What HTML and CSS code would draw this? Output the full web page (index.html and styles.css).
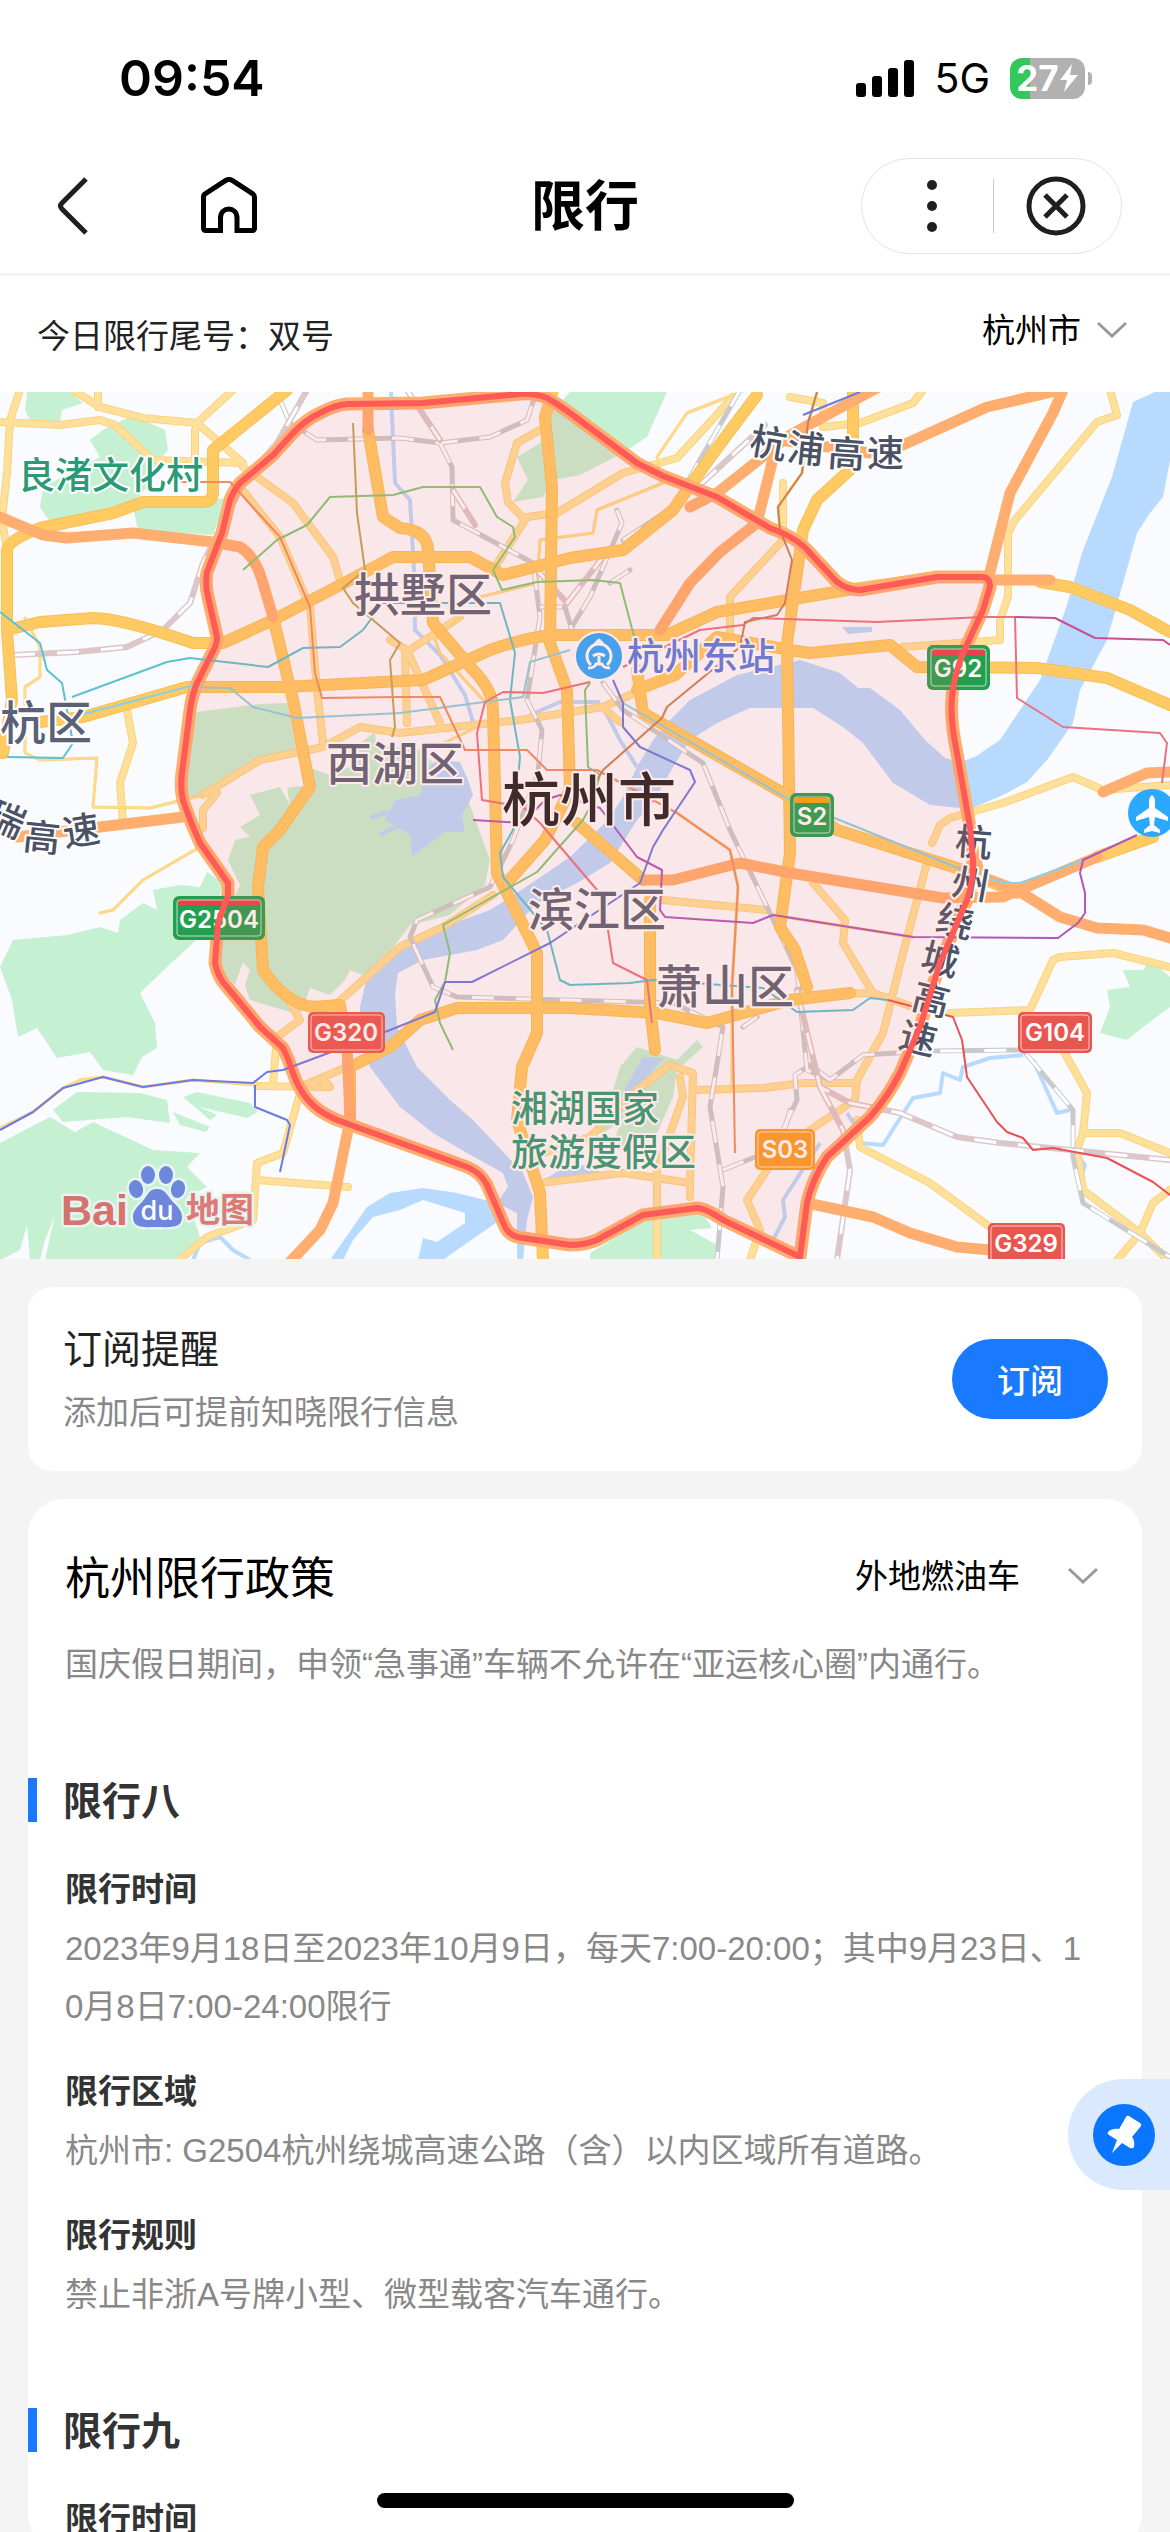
FILE: index.html
```html
<!DOCTYPE html>
<html lang="zh-CN">
<head>
    <meta charset="UTF-8">
    <meta name="viewport" content="width=device-width, initial-scale=1.0">
    <title>限行</title>
    <link rel="stylesheet" href="styles.css">
</head>
<body>

<div class="page">
    <div class="status-bar">
        <span class="time">09:54</span>
        <div class="status-right">
            <svg class="signal" width="58" height="38" viewBox="0 0 58 38">
                <rect x="0" y="24" width="10" height="14" rx="3"/>
                <rect x="16" y="17" width="10" height="21" rx="3"/>
                <rect x="32" y="9" width="10" height="29" rx="3"/>
                <rect x="48" y="1" width="10" height="37" rx="3"/>
            </svg>
            <span class="network">5G</span>
            <div class="battery">
                <span>27</span>
                <svg width="20" height="30" viewBox="0 0 20 30"><path d="M13 1 1 17h7L5 29 19 12h-8z" fill="#fff"/></svg>
            </div>
        </div>
    </div>

    <header class="nav">
        <div class="nav-left">
            <button class="icon-button" aria-label="返回">
                <svg width="32" height="58" viewBox="0 0 32 58"><path d="M29 2 5 26q-3 3 0 6l24 24" fill="none" stroke="#1f1f1f" stroke-width="5"/></svg>
            </button>
            <button class="icon-button" aria-label="首页">
                <svg width="56" height="58" viewBox="0 0 56 58"><path d="M22 53.500H5q-2.500 0-2.500-2.500V20q0-2 2-3.300L24 3.800q4-2.600 8 0l19.500 12.900q2 1.300 2 3.300v31q0 2.500-2.500 2.500H36V41c0-12-16.500-12-16.500 0v12.500M36 41v15" fill="none" stroke="#000" stroke-width="5"/></svg>
            </button>
        </div>
        <h1>限行</h1>
        <div class="capsule">
            <button class="icon-button more" aria-label="更多">
                <svg width="10" height="52" viewBox="0 0 10 52"><circle cx="5" cy="5" r="5"/><circle cx="5" cy="26" r="5"/><circle cx="5" cy="47" r="5"/></svg>
            </button>
            <button class="icon-button close" aria-label="关闭">
                <svg width="60" height="60" viewBox="0 0 60 60" fill="none" stroke="#1f1f1f" stroke-width="5"><circle cx="30" cy="30" r="27"/><path d="M19 19l22 22M41 19 19 41"/></svg>
            </button>
        </div>
    </header>

    <div class="today">
        <p>今日限行尾号：双号</p>
        <div class="picker">
            <select aria-label="城市"><option>杭州市</option></select>
            <svg class="chevron" width="30" height="18" viewBox="0 0 30 18"><path d="M1 2l14 13L29 2"/></svg>
        </div>
    </div>

    <svg class="map" viewBox="0 392 1170 867" role="img" aria-label="杭州市限行区域地图">
        <defs>
            <g id="minor">
                <path d="M20 390 10 420 7 473 2 520 7 550"/>
                <path d="M0 422 60 425 100 420 115 425 153 460 243 463 197 423 143 418 100 407 73 390M98 390v17"/>
                <path d="M233 390 197 423 195 430v33M243 467 293 503 333 557 340 580"/>
                <path d="M240 487 280 537 310 607 317 690 323 743"/>
                <path d="M127 710 133 743 120 783 123 823"/>
                <path d="M203 795 260 760 323 747 360 727 400 733 520 720 603 707 657 683M217 793 203 810 203 828"/>
                <path d="M540 430 517 443 505 483 508 502 525 520 493 570"/>
                <path d="M527 517 557 513 623 473 677 458 733 397M602 707 620 722"/>
                <path d="M390 640 407 650 440 723M407 723 405 653 460 617"/>
                <path d="M730 635V597L783 540V483"/>
                <path d="M903 647 1000 640V620L1008 597V533L1015 520 1097 422 1117 415 1110 390"/>
                <path d="M790 397 823 403 823 427 860 423 913 403 923 390"/>
                <path d="M932 843 940 825 950 818 1003 803 1073 777 1103 790 1170 785"/>
                <path d="M950 1013 1030 1010 1053 960 1060 957 1113 953 1170 967"/>
                <path d="M1063 1050 1087 1093 1083 1133 1077 1150 1083 1190 1140 1233 1153 1203 1170 1190"/>
                <path d="M1083 1133h37l50 20M1117 1260 1140 1233 1170 1262"/>
                <path d="M857 1120 860 1147 930 1183 990 1227"/>
                <path d="M927 863 903 953 883 1033 857 1080 855 1100 810 1130M697 1090 763 1088 803 1083h54"/>
                <path d="M813 883 845 920 843 943 873 993 807 995M873 993 913 1007"/>
                <path d="M663 900 767 910M333 1007 400 947 443 927 493 895"/>
                <path d="M273 1083 277 1037 300 1020 290 1003M257 1086 330 1087 322 1078 300 1087 347 1067"/>
                <path d="M300 1093 283 1153 257 1163 253 1220 207 1237 177 1262M257 1180 348 1187"/>
                <path d="M540 1183 623 1173 690 1183 693 1073 670 1065 637 1090 590 1137 543 1153M680 1077 683 1097 657 1170V1260M690 1183v14"/>
                <path d="M767 1170 747 1200 760 1230 750 1260"/>
            </g>
            <g id="narrow">
                <path d="M25 618 40 647V677L25 687V753L40 760 97 758 93 807 150 808 203 795"/>
                <path d="M733 395 687 413 657 457 663 483 597 510 593 533 540 540 537 583 480 597"/>
                <path d="M100 913 113 910 143 880 200 847"/>
                <path d="M460 617 435 640 440 653 485 702M677 813 730 850 738 887 732 987V1090"/>
                <path d="M0 1128 33 1112 63 1088 80 1080 103 1077 143 1087 193 1080 257 1085"/>
                <path d="M772 915 913 937M817 393 808 423 802 473 778 507 780 530M440 745 475 728"/>
            </g>
            <g id="major">
                <path d="M287 390 213 450V493Q212 502 203 502H143L113 513 40 528Q8 540 7 550V630L12 700 3 753"/>
                <path d="M7 630 40 622 93 618Q120 618 193 643H223L273 620 350 580 393 557H470L503 575 570 558 623 550 673 510Q700 470 757 395"/>
                <path d="M40 722 83 717 187 687H283L423 680 490 650Q530 636 557 635H667L717 612 847 590 937 577H985"/>
                <path d="M368 430 383 517 400 528Q427 530 428 550L433 623 473 670Q493 690 493 710L497 873 537 953V1033L522 1067 517 1120 540 1193 543 1260"/>
                <path d="M553 390 545 417 552 487 550 643 567 690 570 790 545 840 507 883"/>
                <path d="M273 617 293 700 310 787 280 830 263 847 258 887 263 970Q285 1003 313 1007L340 1005 347 1045"/>
                <path d="M350 1120V1067L390 1047 420 1020 457 1008 570 1008 657 1013 707 1023 790 1000 850 993"/>
                <path d="M853 390V467L817 500 803 530 787 643 790 853 780 927 795 950 807 987"/>
                <path d="M637 690 675 675 717 637 790 650 810 653 890 645 917 667 1037 668 1107 678 1170 705M637 670 643 713 790 797 837 830 963 870 1017 893"/>
                <path d="M1040 582 1070 587 1130 610 1170 632M577 823 643 880M650 900V1007L655 1050M1097 857 1153 837"/>
            </g>
            <g id="highway">
                <path d="M0 517 43 535 67 538 133 533 213 542 240 547Q255 556 262 580L273 617"/>
                <path d="M17 837 100 827 183 817M368 390V430"/>
                <path d="M1063 390 1053 413 1010 493 988 580H1050M1060 390 987 407 903 445 870 453 780 440"/>
                <path d="M877 388 790 435 717 493 690 507M777 443 757 523 720 552 690 583 660 630"/>
                <path d="M643 880H673L740 863 790 873 943 898 1003 897 1097 857"/>
                <path d="M963 870 1017 890 1060 917 1097 928 1143 930 1170 938M973 850 980 875"/>
                <path d="M807 1203 873 1217 910 1233 957 1247 990 1250M1103 792 1147 773 1170 772"/>
                <path d="M347 1045 350 1120 333 1203 320 1230 290 1262"/>
            </g>
            <g id="rail">
                <path d="M280 400 290 423 317 440 400 438 440 443 490 437 527 420 537 390"/>
                <path d="M440 443 452 467 453 520 533 563 540 617 527 700 542 730 538 773 513 840 490 887 417 920 410 937 433 987 457 997 673 1003 723 1027 710 1107 723 1187 717 1260"/>
                <path d="M617 510 622 523 590 597 570 630M623 540 673 507 740 390M610 583 630 570M540 607 565 607 572 630"/>
                <path d="M603 683 623 710 703 763 730 830 770 913 797 970 807 1070 830 1080"/>
                <path d="M783 1130 797 1100 795 1075 810 1065 830 1080 863 1055 930 1051 1023 1050 1073 1110V1157L1083 1203 1170 1257"/>
                <path d="M743 1027 757 1017M723 1170 755 1157M785 1128 790 1110"/>
            </g>
            <g id="rail-fast">
                <path d="M13 655 77 652 127 647 163 630 190 603 203 563 223 523 245 480 277 443 307 390"/>
                <path d="M407 390 440 440M453 490 475 525M537 570 567 603 603 557M700 485 765 425"/>
                <path d="M797 990 820 1087 850 1103 900 1113 957 1137 1000 1143 1170 1160M820 1087 843 1130 850 1170 837 1260"/>
            </g>
            <path id="ring" d="M347 404Q335 405 320 413 305 420 293 433L273 455 240 483Q234 490 230 500L222 533 207 572Q205 585 208 597L217 637Q217 645 212 653L197 683Q192 695 190 710L182 773Q180 788 183 800 187 812 193 827L200 843 228 883V895L218 923 215 963Q218 978 227 987L260 1027 283 1048Q289 1060 293 1073 298 1088 308 1100 318 1112 337 1120L467 1167Q480 1172 487 1185L505 1227Q510 1237 523 1238L570 1245Q585 1245 597 1240L643 1215 697 1208Q705 1208 723 1220L800 1257 807 1203Q812 1180 827 1157L870 1117Q887 1098 900 1073L920 1027 940 963 967 900Q974 880 973 860L970 827 957 753Q950 720 952 697 953 680 963 653L983 610 990 587Q990 577 982 577H937L860 590Q848 590 837 582L810 553Q798 538 770 528L717 497 663 476 637 463 570 413Q558 404 547 398 535 393 520 394L423 403Z"/>
        </defs>

        <rect y="392" width="1170" height="867" fill="#fafbff"/>

        <g class="green">
            <path d="M27 392 25 410 30 420 60 422 62 410 83 403 70 392zM127 418 143 420 165 430 168 450 157 463 147 487 133 503 80 520 50 522 40 507 43 487 100 457 90 440 103 430zM133 507 227 498 213 535 138 530z"/>
            <path d="M197 712 260 704 287 703 297 753 260 760 203 795 183 798 182 760z"/>
            <path d="M310 768 330 775 355 765 362 742 375 732 376 745 420 750 440 770 468 800 490 860 485 885 450 915 410 925 395 945 367 977 350 970 345 980 330 995 310 988 300 1015 250 1000 245 985 250 970 243 962 235 985 220 970 218 930 240 885 228 860 235 840 250 837 240 827 260 815 250 795 280 787 290 805 287 788 308 785z"/>
            <path d="M0 967 13 940 67 935 100 927 118 933 120 920 143 903 157 910 153 890 180 885 200 887 207 872 223 883 213 920 193 943 167 967 140 993 155 1023 157 1048 142 1057 133 1075 103 1070 90 1052 57 1058 37 1028 18 1037 12 1000z"/>
            <path d="M53 1110 77 1092 140 1093 167 1100 170 1123 127 1117 63 1122zM183 1097 197 1092 250 1103 258 1112 247 1118 200 1107 217 1115 210 1120zM173 1112 210 1127 206 1132 180 1125z"/>
            <path d="M0 1143 50 1117 75 1132 93 1122 153 1150 200 1153 187 1167 207 1187 187 1197 200 1237 183 1260H45L55 1215 45 1240 40 1260H30L27 1225 20 1250 0 1260z"/>
            <path d="M553 410 570 392H667L647 437 623 453 580 475 553 480 543 497 513 502 528 480 517 457 540 443z"/>
            <path d="M613 1090 620 1067 637 1047 677 1060 697 1040 703 1047 677 1070 673 1097 657 1133 630 1153 610 1147 623 1120 600 1135z"/>
            <path d="M590 1253 650 1217 700 1208 712 1228 690 1230 717 1245V1260H590zM1123 970 1143 970 1150 960 1170 977V1007L1143 1027 1127 1040 1100 1033 1110 1007 1107 990 1130 987z"/>
        </g>

        <g class="water">
            <path d="M1133 402 1155 392H1170V460L1163 497 1150 513 1137 533 1107 640 1080 690 1073 723 1047 760 1027 782 1003 795 970 809 930 805 893 783 863 743 843 727 813 708 750 708 717 723 690 740 673 767 653 803 637 820 610 863 577 883 537 903 503 940 477 950 423 960 398 973 395 993 397 1027 417 1067 450 1100 473 1120 523 1173 533 1197 527 1220 523 1260H517V1213L497 1203 508 1187 503 1173 467 1153 433 1133 400 1107 370 1067 362 1047 360 1007 367 977 400 947 443 927 490 910 517 893 570 857 608 820 623 797 637 767 653 740 667 723 690 700 737 675 770 667 800 660 840 673 858 688 870 688 900 710 925 740 945 758 960 762 975 757 1000 740 1020 710 1040 680 1067 605 1083 550 1112 477z"/>
            <path d="M437 760 460 762 468 780 473 795 462 815 465 832 445 832 428 845 412 856 410 835 385 820 395 800 420 795 425 770z"/>
            <path d="M390 1193 423 1188 457 1193 497 1203 507 1215 457 1250 443 1260H418L423 1238 437 1242 465 1223V1213L423 1200 400 1210 373 1217 353 1240 343 1260H330L367 1207z"/>
            <path d="M643 1057 663 1058 645 1080 620 1097zM543 1180 560 1170 585 1165 600 1172zM842 627 872 627 872 632 848 634z"/>
        </g>
        <g class="stream">
            <path d="M193 1260 200 1243 220 1237 233 1250 250 1260M860 1143 883 1145 913 1098 940 1093 943 1073 960 1080 963 1067 990 1058 1023 1055M1033 1060 1057 1113 1070 1110M847 1113 858 1130"/>
            <path d="M391 392 395 483 410 500 414 570 415 630 440 655 465 695 473 722M820 1143 783 1200 785 1217 773 1240M603 707 620 740 637 767M530 715 560 702 600 702M1073 1150 1085 1165 1080 1180M395 810 370 818M400 825 380 835"/>
        </g>

        <use href="#minor" class="minor-edge"/><use href="#minor" class="minor-line"/>
        <use href="#narrow" class="narrow-edge"/><use href="#narrow" class="narrow-line"/>
        <use href="#rail" class="rail-edge"/><use href="#rail" class="rail-dash"/>
        <use href="#rail-fast" class="fast-edge"/><use href="#rail-fast" class="rail-dash"/>
        <use href="#major" class="major-edge"/><use href="#major" class="major-line"/>
        <use href="#highway" class="highway-line"/>
        <use href="#ring" class="ring-road"/>

        <g class="metro">
            <path stroke="#5bc1d3" d="M0 612 40 643 47 670 62 683 67 710 73 743 63 758 7 757M72 697 167 662 190 658 268 667 303 648 340 647 363 630 383 603 500 603 515 653 510 700 520 757 513 830 500 853 503 877 547 930 560 980 570 985 630 983 653 980 763 988 797 1012 853 1010 870 998 888 1000"/>
            <path stroke="#8ad0e2" d="M80 715 187 687 230 688 253 707 297 718 400 713 523 697 530 662 570 650M623 703 790 800 963 870 1003 883 1020 883 1083 860"/>
            <path stroke="#80c878" d="M243 570 277 540 307 525 330 497 393 495 423 487 480 487 497 517 513 527 515 537 493 570 502 590 537 582 593 580 620 583 635 640M590 683 585 690 588 767 600 775 590 807 583 820 537 872 443 925 450 953 445 982 435 1000 440 1023 453 1050"/>
            <path stroke="#f18c61" d="M180 482H230L280 537 310 607 315 673 322 698 400 697 440 697 465 750H527L547 770H597L677 813 730 850 738 887 732 987 735 1153"/>
            <path stroke="#ec7080" d="M590 682 543 693 503 692 485 702 477 733 482 800 523 807 540 823 563 850 603 897 613 963 647 980 652 1023M623 667 700 630 743 625 753 618 877 622 983 617H1015L1017 698 1063 727 1160 733 1167 743 1162 783"/>
            <path stroke="#c4508e" d="M1015 617 1055 618 1095 638 1163 640 1170 645"/>
            <path stroke="#c98055" d="M817 392 808 423 802 473 778 507 780 530 792 560 785 603 777 615 745 622 740 647 667 707 662 718 603 770 597 780"/>
            <path stroke="#6a7ae2" d="M613 680 623 703V727L640 747 690 770 695 782 663 830 653 847 640 883 550 943 472 982H445L435 1012 390 1030 283 1070 267 1072 253 1083 193 1080 143 1087 103 1077 63 1088 33 1112 0 1130M255 1085V1107L287 1120 290 1125 280 1172M803 415 860 392"/>
            <path stroke="#b156bb" d="M473 820 523 823 545 800 560 795 600 808 637 857 662 870 660 910 665 917 753 923 773 915 913 937 1058 938 1078 923 1085 913V893L1080 873 1083 860 1137 835"/>
            <path stroke="#ea5056" d="M888 1000 953 1017 962 1040 967 1077 997 1122 1007 1132 1023 1138 1033 1150 1053 1148 1107 1158 1153 1182 1170 1195"/>
            <path stroke="#bfa456" d="M353 423 357 513 365 570 343 588 353 603 400 643 390 660 395 727 392 737"/>
        </g>

        <g class="label district">
            <text x="0" y="739">杭区</text>
            <text x="354" y="611">拱墅区</text>
            <text x="326" y="780">西湖区</text>
            <text x="528" y="926">滨江区</text>
            <text x="656" y="1003">萧山区</text>
        </g>
        <text class="label city" x="502" y="821">杭州市</text>
        <g class="label scenic">
            <text x="18" y="489">良渚文化村</text>
            <text x="511" y="1122">湘湖国家</text>
            <text x="511" y="1166">旅游度假区</text>
        </g>
        <text class="label station" x="627" y="670">杭州东站</text>
        <g class="label expressway">
            <text x="748 786 827 867" y="453 460 466 467" rotate="10 6 4 0">杭浦高速</text>
            <text x="954 950 934 919 910 897" y="854 894 930 968 1008 1047" rotate="5 10 14 14 14 14">杭州绕城高速</text>
            <text x="-16 22 65" y="824 849 847" rotate="24 6 -9">瑞高速</text>
        </g>

        <g class="shield">
            <rect class="green-shield" x="927" y="645" width="63" height="45" rx="6"/>
            <path d="M932 650h53v5h-53z" fill="#e5434a"/>
            <rect class="shield-line" x="931" y="649" width="55" height="37" rx="3"/>
            <text x="958" y="677">G92</text>
            <rect class="green-shield" x="790" y="793" width="44" height="44" rx="6"/>
            <path d="M795 798h34v5h-34z" fill="#f7a511"/>
            <rect class="shield-line" x="794" y="797" width="36" height="36" rx="3"/>
            <text x="812" y="825">S2</text>
            <rect class="green-shield" x="173" y="896" width="92" height="44" rx="6"/>
            <path d="M178 900h82v5h-82z" fill="#e5434a"/>
            <rect class="shield-line" x="177" y="900" width="84" height="36" rx="3"/>
            <text x="219" y="928">G2504</text>
            <rect class="red-shield" x="308" y="1012" width="77" height="41" rx="5"/>
            <rect class="shield-line" x="311" y="1015" width="71" height="35" rx="3"/>
            <text x="346" y="1041">G320</text>
            <rect class="red-shield" x="1018" y="1012" width="74" height="41" rx="5"/>
            <rect class="shield-line" x="1021" y="1015" width="68" height="35" rx="3"/>
            <text x="1055" y="1041">G104</text>
            <rect class="red-shield" x="988" y="1223" width="77" height="41" rx="5"/>
            <rect class="shield-line" x="991" y="1226" width="71" height="35" rx="3"/>
            <text x="1026" y="1252">G329</text>
            <rect class="orange-shield" x="755" y="1129" width="60" height="41" rx="5"/>
            <rect class="shield-line" x="758" y="1132" width="54" height="35" rx="3"/>
            <text x="785" y="1158">S03</text>
        </g>

        <!-- railway station -->
        <circle cx="599" cy="656" r="24" fill="#2ba8ff" stroke="#fff" stroke-width="2"/>
        <g fill="none" stroke="#fff" stroke-width="3">
            <path d="M591 665a12 12 0 1 1 16 0M595 644l4-4 4 4"/>
            <path d="M593 656q6-4 12 0M599 656v8M588 668q7 0 8-4h6q1 4 8 4" />
        </g>
        <!-- airport -->
        <circle cx="1152" cy="813" r="24" fill="#2ba8ff"/>
        <path fill="#fff" d="M1152 795q3 2 3 7v6l13 9v4l-13-4-1 8 6 5v3l-8-2-8 2v-3l6-5-1-8-13 4v-4l13-9v-6q0-5 3-7z"/>

        <use href="#ring" class="zone"/>

        <g class="map-logo">
            <text class="logo-bai" x="61" y="1225">Bai</text>
            <g fill="#6d87dc">
                <ellipse cx="148" cy="1175" rx="7" ry="9"/>
                <ellipse cx="166" cy="1175" rx="7" ry="9"/>
                <ellipse cx="136" cy="1189" rx="7" ry="9" transform="rotate(-12 136 1189)"/>
                <ellipse cx="178" cy="1189" rx="7" ry="9" transform="rotate(12 178 1189)"/>
                <path d="M157 1189c9 0 11 8 16 13s9 9 9 15c0 12-13 10-25 10s-24 2-24-10c0-6 4-10 9-15s6-13 15-13z"/>
            </g>
            <text class="logo-du" x="157" y="1220">du</text>
            <text class="logo-map" x="186" y="1222">地图</text>
        </g>
    </svg>

    <main class="content">
        <section class="card subscribe">
            <div class="subscribe-text">
                <h2>订阅提醒</h2>
                <p>添加后可提前知晓限行信息</p>
            </div>
            <button class="subscribe-button">订阅</button>
        </section>

        <section class="card policy">
            <div class="policy-head">
                <h2>杭州限行政策</h2>
                <div class="picker wide">
                    <select aria-label="车辆类型"><option>外地燃油车</option></select>
                    <svg class="chevron" width="30" height="18" viewBox="0 0 30 18"><path d="M1 2l14 13L29 2"/></svg>
                </div>
            </div>
            <p class="notice">国庆假日期间，申领“急事通”车辆不允许在“亚运核心圈”内通行。</p>

            <article class="rule">
                <h3>限行八</h3>
                <dl>
                    <dt>限行时间</dt>
                    <dd>2023年9月18日至2023年10月9日，每天7:00-20:00；其中9月23日、10月8日7:00-24:00限行</dd>
                    <dt>限行区域</dt>
                    <dd>杭州市: G2504杭州绕城高速公路（含）以内区域所有道路。</dd>
                    <dt>限行规则</dt>
                    <dd>禁止非浙A号牌小型、微型载客汽车通行。</dd>
                </dl>
            </article>

            <article class="rule">
                <h3>限行九</h3>
                <dl>
                    <dt>限行时间</dt>
                </dl>
            </article>
        </section>
    </main>

    <button class="pin-button" aria-label="固定">
        <svg width="62" height="62" viewBox="0 0 62 62">
            <circle cx="31" cy="31" r="31" fill="#0a75ff"/>
            <path d="M36 12q-2-1-3 1l-7 12q-7-1-11 3-1 2 1 3l8 5-5 13 10-10 8 5q3 1 4-1 1-7-2-10l9-11q1-2-1-3z" fill="#fff"/>
        </svg>
    </button>
    <div class="home-indicator"></div>
</div>

</body>
</html>
```
FILE: styles.css
```css
* {
    box-sizing: border-box;
}
body {
    margin: 0;
    background-color: #f4f4f4;
    color: #222;
    font-family: "Liberation Sans", "Noto Sans CJK SC", sans-serif;
    font-size: 33px;
}
h1, h2, h3, p, dl, dd {
    margin: 0;
    font-weight: 400;
}
button, select {
    border: none;
    background: none;
    padding: 0;
    font: inherit;
    color: inherit;
}
svg {
    display: block;
}
.page {
    height: 100vh;
    overflow: hidden;
}

/* status bar */
.status-bar {
    display: flex;
    justify-content: space-between;
    align-items: center;
    height: 138px;
    padding: 18px 79px 0 119px;
    background-color: #fff;
    color: #000;
    font-family: Inter, sans-serif;
}
.time {
    font-size: 50px;
    font-weight: 600;
}
.status-right {
    display: flex;
    align-items: center;
    gap: 20px;
}
.network {
    font-size: 41px;
}
.battery {
    position: relative;
    display: flex;
    align-items: center;
    justify-content: center;
    width: 75px;
    height: 41px;
    margin-right: 6px;
    border-radius: 12px;
    background: linear-gradient(to right, #34c759 20px, #b1b1b1 20px);
    color: #fff;
    font-size: 35px;
    font-weight: 700;
}
.battery::after {
    content: "";
    position: absolute;
    right: -7px;
    top: 14px;
    width: 4px;
    height: 13px;
    border-radius: 0 6px 6px 0;
    background-color: #b1b1b1;
}

/* title bar */
.nav {
    display: grid;
    grid-template-columns: 1fr auto 1fr;
    align-items: center;
    height: 138px;
    padding: 0 48px;
    border-bottom: 3px solid #f5f5f5;
    background-color: #fff;
}
.nav-left {
    display: flex;
    gap: 112px;
    padding-left: 9px;
}
.nav h1 {
    padding-top: 3px;
    color: #000;
    font-size: 54px;
    font-weight: 700;
    line-height: 60px;
}
.capsule {
    display: flex;
    align-items: center;
    justify-self: end;
    width: 261px;
    height: 96px;
    border: 1px solid #e4e4e4;
    border-radius: 48px;
}
.capsule .icon-button {
    display: flex;
    flex: 1;
    justify-content: center;
    align-items: center;
    height: 54px;
    fill: #1f1f1f;
}
.capsule .more {
    padding-left: 8px;
}
.capsule .close {
    padding-right: 4px;
    border-left: 1px solid #ccc;
}

/* tail number and city */
.today {
    display: flex;
    justify-content: space-between;
    align-items: center;
    height: 116px;
    padding: 0 43px 0 37px;
    background-color: #fff;
}
.picker {
    display: flex;
    align-items: center;
    gap: 16px;
    padding-bottom: 8px;
    color: #000;
}
.picker.wide {
    gap: 48px;
}
.picker select {
    appearance: none;
    height: 48px;
}
.chevron {
    fill: none;
    stroke: #999;
    stroke-width: 3px;
}

/* map */
.map {
    width: 100%;
    height: auto;
    font-family: "Noto Sans CJK SC", sans-serif;
    stroke-linejoin: round;
}
.green {
    fill: #c5f0d2;
}
.water {
    fill: #b8daff;
}
.stream {
    fill: none;
    stroke: #b8daff;
    stroke-width: 4px;
}
.map use {
    fill: none;
    stroke-linecap: round;
}
.minor-edge {
    stroke: #fbd37f;
    stroke-width: 8px;
}
.minor-line {
    stroke: #fee09a;
    stroke-width: 6px;
}
.narrow-edge {
    stroke: #fbcf70;
    stroke-width: 3px;
}
.narrow-line {
    stroke: #fedc8c;
    stroke-width: 2px;
}
.major-edge {
    stroke: #f9c056;
    stroke-width: 12px;
}
.major-line {
    stroke: #ffca62;
    stroke-width: 10px;
}
.highway-line {
    stroke: #ffae70;
    stroke-width: 11px;
}
.rail-edge {
    stroke: #c9c9cc;
    stroke-width: 5px;
}
.fast-edge {
    stroke: #dbc6ca;
    stroke-width: 6px;
}
.map .rail-dash {
    stroke: #fff;
    stroke-width: 3px;
    stroke-linecap: butt;
    stroke-dasharray: 22;
}
.ring-road {
    stroke: #ffae70;
    stroke-width: 13px;
}
.metro {
    fill: none;
    stroke-width: 2px;
}
.label {
    stroke: #fff;
    stroke-width: 4px;
    paint-order: stroke;
    font-weight: 500;
}
.district {
    fill: #5a6176;
    font-size: 46px;
}
.city {
    fill: #221f24;
    font-size: 58px;
}
.scenic {
    fill: #2c9a76;
    font-size: 37px;
}
.station {
    fill: #5a7be2;
    font-size: 37px;
}
.expressway {
    fill: #4b5266;
    font-size: 37px;
}
.shield {
    font-family: Inter, sans-serif;
    font-size: 24px;
    font-weight: 600;
    text-anchor: middle;
    fill: #fff;
}
.green-shield {
    fill: #22a04f;
}
.red-shield {
    fill: #e85650;
}
.orange-shield {
    fill: #fa9c28;
}
.shield-line {
    fill: none;
    stroke: #fff;
    stroke-opacity: 0.7;
    stroke-width: 1px;
}
.map .zone {
    fill: #fa6e64;
    fill-opacity: 0.14;
    stroke: #ff5a55;
    stroke-width: 6px;
}
.map-logo {
    paint-order: stroke;
    stroke: #e6f5ef;
    stroke-width: 5px;
    font-weight: 700;
}
.logo-bai {
    fill: #d5736f;
    font-family: "Liberation Sans", sans-serif;
    font-size: 43px;
}
.logo-du {
    fill: #fff;
    stroke: none;
    font-family: Inter, sans-serif;
    font-size: 27px;
    font-weight: 500;
    text-anchor: middle;
}
.logo-map {
    fill: #dd7a78;
    font-size: 34px;
}

/* cards */
.content {
    display: flex;
    flex-direction: column;
    gap: 28px;
    padding: 28px;
}
.card {
    border-radius: 24px;
    background-color: #fff;
}
.subscribe {
    display: flex;
    justify-content: space-between;
    align-items: center;
    height: 184px;
    padding: 0 34px 0 35px;
}
.subscribe-text {
    padding-top: 4px;
}
.subscribe h2 {
    font-size: 39px;
    line-height: 64px;
}
.subscribe p {
    color: #888;
    line-height: 62px;
}
.subscribe-button {
    width: 156px;
    height: 80px;
    border-radius: 40px;
    background-color: #1a7aff;
    color: #fff;
    font-weight: 500;
}
.policy {
    border-radius: 36px;
}
.policy-head {
    display: flex;
    justify-content: space-between;
    align-items: center;
    padding: 53px 44px 28px 37px;
}
.policy-head h2 {
    color: #000;
    font-size: 45px;
    line-height: 56px;
}
.notice {
    padding: 0 37px;
    color: #888;
    line-height: 58px;
}
.rule {
    padding-top: 84px;
}
.rule h3 {
    padding: 4px 0 0 26px;
    border-left: 9px solid #1a7aff;
    color: #333;
    font-size: 39px;
    font-weight: 700;
    line-height: 40px;
}
.rule dl {
    padding: 38px 50px 0 37px;
}
.rule dt {
    color: #333;
    font-weight: 700;
    line-height: 60px;
}
.rule dd {
    color: #888;
    line-height: 58px;
    word-break: break-all;
}
.rule dd + dt {
    margin-top: 26px;
}

/* floating parts */
.pin-button {
    position: fixed;
    right: 0;
    top: 2079px;
    display: flex;
    align-items: center;
    width: 102px;
    height: 111px;
    padding-left: 25px;
    border-radius: 56px 0 0 56px;
    background-color: #dae9fd;
}
.home-indicator {
    position: fixed;
    left: 50%;
    bottom: 24px;
    width: 417px;
    height: 15px;
    margin-left: -208px;
    border-radius: 8px;
    background-color: #000;
}
```
